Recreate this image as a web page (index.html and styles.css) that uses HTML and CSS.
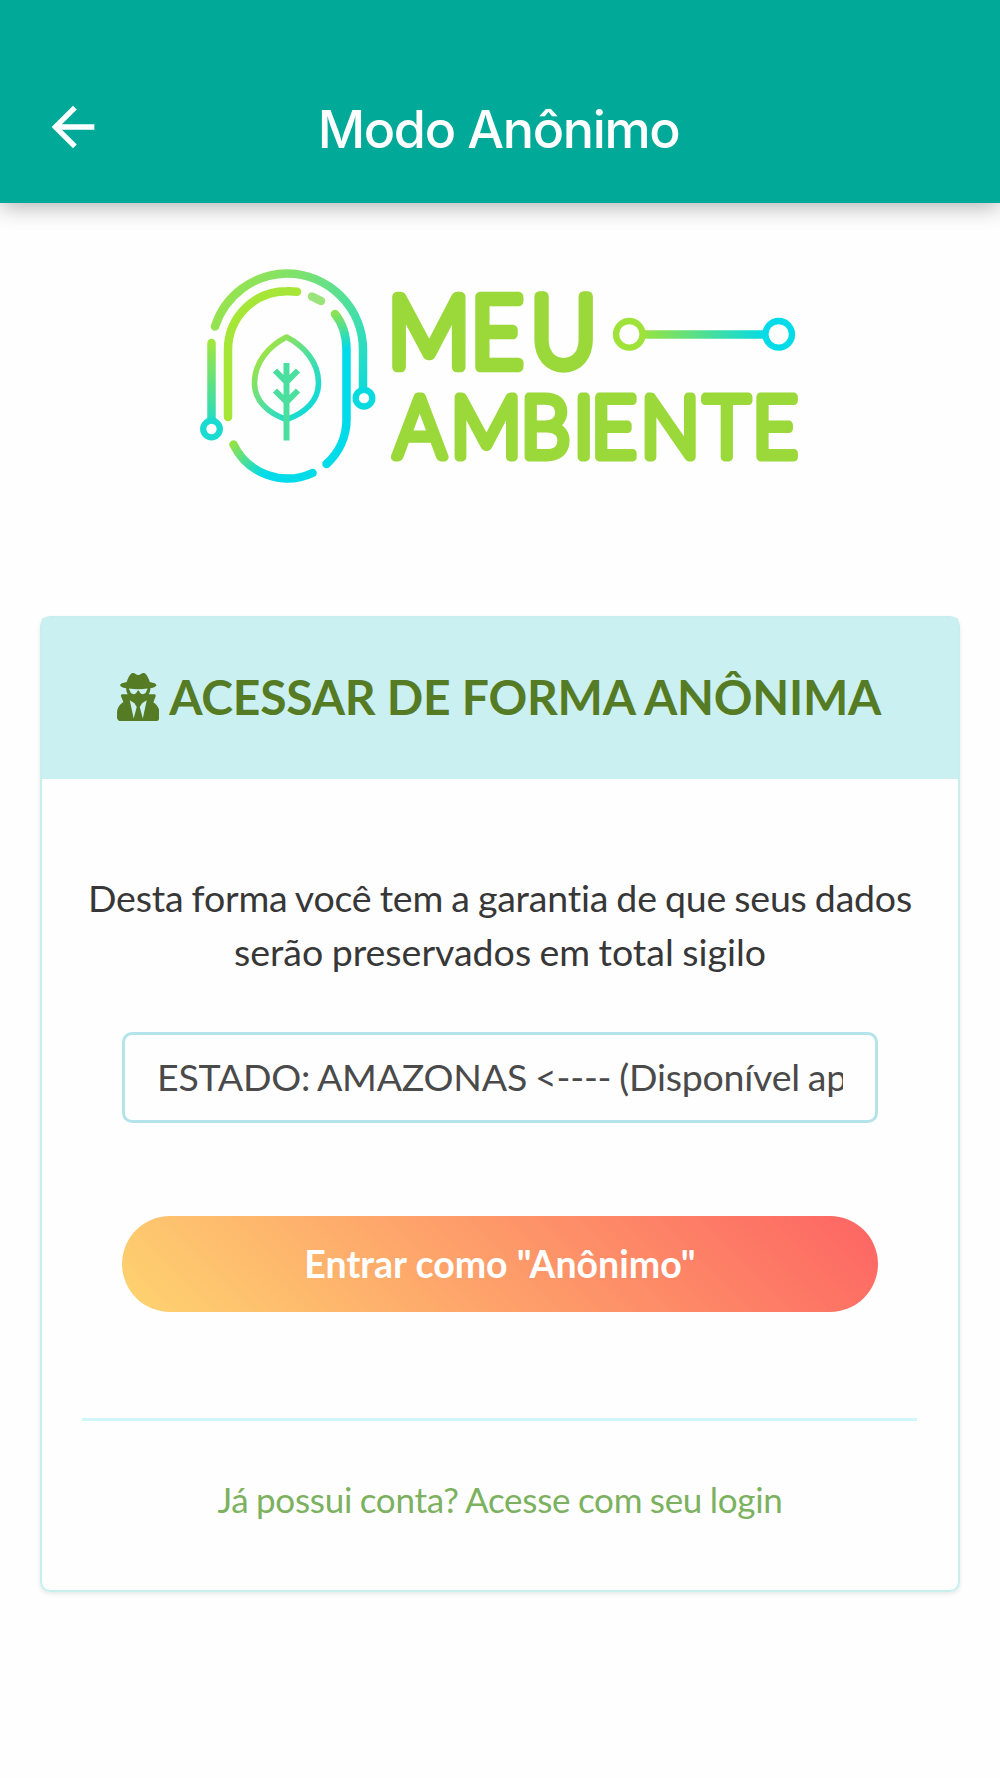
FILE: index.html
```html
<!DOCTYPE html>
<html lang="pt-BR">
<head>
<meta charset="utf-8">
<title>Modo Anônimo</title>
<link rel="stylesheet" href="styles.css">
</head>
<body>
<header class="topbar">
  <a class="back" href="#" aria-label="Voltar">
    <svg class="back-icon" viewBox="0 0 24 24"><path d="M20 11H7.83l5.59-5.59L12 4l-8 8 8 8 1.41-1.41L7.83 13H20v-2z"/></svg>
  </a>
  <h1 class="title">Modo Anônimo</h1>
</header>
<main class="content">
  <svg class="logo" viewBox="190 260 620 230" fill="none" stroke-linecap="round">
    <defs>
      <linearGradient id="outer" gradientUnits="userSpaceOnUse" x1="215" y1="300" x2="363" y2="388"><stop offset="0" stop-color="#9be34a"/><stop offset=".35" stop-color="#7ce26e"/><stop offset=".75" stop-color="#45dfa8"/><stop offset="1" stop-color="#12dbd6"/></linearGradient>
      <linearGradient id="side" gradientUnits="userSpaceOnUse" x1="211" y1="342" x2="211" y2="440"><stop offset="0" stop-color="#9ee63f"/><stop offset="1" stop-color="#0adae0"/></linearGradient>
      <linearGradient id="inner" gradientUnits="userSpaceOnUse" x1="335" y1="312" x2="343" y2="350"><stop offset="0" stop-color="#8ee24f"/><stop offset="1" stop-color="#00dbea"/></linearGradient>
      <linearGradient id="base" gradientUnits="userSpaceOnUse" x1="232" y1="443" x2="262" y2="476"><stop offset="0" stop-color="#96e345"/><stop offset="1" stop-color="#00dbea"/></linearGradient>
      <linearGradient id="leaf" gradientUnits="userSpaceOnUse" x1="258" y1="360" x2="312" y2="405"><stop offset="0" stop-color="#9be34a"/><stop offset=".5" stop-color="#4fdf9f"/><stop offset="1" stop-color="#12dad8"/></linearGradient>
      <linearGradient id="wire" gradientUnits="userSpaceOnUse" x1="640" y1="334" x2="765" y2="334"><stop offset="0" stop-color="#9be33c"/><stop offset="1" stop-color="#05dbe6"/></linearGradient>
    </defs>
    <g stroke-width="8.5">
      <path stroke="url(#outer)" d="M215 326.500A76.500 76.500 0 0 1 286.500 273.500A76.500 76.500 0 0 1 363 350.500V388"/>
      <path stroke="url(#side)" d="M211.5 343V418"/>
      <path stroke="#a6e636" d="M228 417V350A58.500 58.500 0 0 1 286.500 291.200Q292 291 297 291.800"/>
      <path stroke="#9be47b" d="M312 296.500L321 301"/>
      <path stroke="url(#inner)" d="M335 314Q346.5 328 346.5 350V419A60 60 0 0 1 326.500 464"/>
      <path stroke="url(#base)" d="M233.500 444.500A60 60 0 0 0 312.500 473"/>
    </g>
    <g stroke-width="6.3">
      <circle cx="364" cy="398.200" r="8.300" stroke="#08dbe0"/>
      <circle cx="211.500" cy="429" r="8.300" stroke="#1adbd0"/>
      <circle cx="629.300" cy="334.300" r="13.300" stroke="#9fe33a"/>
      <circle cx="778.700" cy="334.300" r="13.300" stroke="#04dbe8"/>
    </g>
    <path stroke="url(#wire)" stroke-width="8.5" stroke-linecap="butt" d="M645 334.500H764"/>
    <path stroke="url(#leaf)" stroke-width="5.600" stroke-linejoin="round" d="M286.500 337C269 346 254.500 362 254.500 383C254.500 400 267 413 286.500 419.500C306 413 318.500 400 318.500 383C318.500 362 304 346 286.500 337Z"/>
    <path stroke="#4bdf9f" stroke-width="6" stroke-linecap="butt" d="M286.500 363V440.500M275 370.500L286.500 382L298 370.500M275 390.500L286.500 402L298 390.500"/>
    <text class="word word-top" transform="scale(.93 1)" x="416.800 505.800 570.400" y="367.300">MEU</text>
    <text class="word word-bottom" transform="scale(.93 1)" x="423.700 484.400 559.700 616.600 635.400 688.700 756.900 808.800" y="456.600">AMBIENTE</text>
  </svg>
  <section class="card">
    <h2 class="card-head">
      <svg class="spy" viewBox="0 0 448 512"><path d="M383.900 308.300l23.900-62.600c4-10.500-3.700-21.700-15-21.700h-58.500c11-18.900 17.800-40.600 17.800-64v-.3c39.200-7.800 64-19.100 64-31.700 0-13.300-27.300-25.100-70.100-33-9.200-32.800-27-65.800-40.600-82.800-9.500-11.900-25.900-15.600-39.500-8.800l-27.600 13.800c-9 4.500-19.600 4.500-28.600 0L182.100 3.400c-13.600-6.800-30-3.100-39.500 8.800-13.500 17-31.400 50-40.600 82.800-42.700 7.900-70 19.700-70 33 0 12.600 24.800 23.900 64 31.700v.3c0 23.400 6.800 45.100 17.800 64H56.300c-11.500 0-19.200 11.700-14.700 22.300l25.800 60.200C27.300 329.800 0 372.700 0 422.400v44.800C0 491.900 20.100 512 44.800 512h358.400c24.700 0 44.800-20.100 44.800-44.800v-44.800c0-48.400-25.800-90.400-64.100-114.100zM176 480l-41.600-192 49.600 32 24 40-32 120zm96 0l-32-120 24-40 49.600-32L272 480zm41.700-298.500c-3.900 11.900-7 24.600-16.500 33.400-10.100 9.300-48 22.400-64-25-2.800-8.400-15.400-8.400-18.300 0-17 50.200-56 32.400-64 25-9.500-8.800-12.700-21.500-16.500-33.400-.8-2.500-6.300-5.700-6.300-5.800v-10.800c28.300 3.600 61 5.800 96 5.800s67.700-2.100 96-5.800v10.800c-.1.100-5.600 3.200-6.400 5.800z"/></svg>
      <span>ACESSAR DE FORMA ANÔNIMA</span>
    </h2>
    <div class="card-body">
      <p class="lead"><span class="tight">Desta forma você tem a garantia de que seus dados</span><br>serão preservados em total sigilo</p>
      <div class="select"><span class="select-value">ESTADO: AMAZONAS &lt;---- (Disponível apenas)</span></div>
      <button class="enter">Entrar como "Anônimo"</button>
      <hr class="rule">
      <a class="login" href="#">Já possui conta? Acesse com seu login</a>
    </div>
  </section>
</main>
</body>
</html>
```
FILE: styles.css
```css
* { box-sizing: border-box; }
body {
  margin: 0;
  min-height: 1778px;
  background: #fefefe;
  font-family: Lato, "Liberation Sans", sans-serif;
  font-variant-ligatures: none;
}
.topbar {
  display: grid;
  grid-template-columns: 105px 1fr 105px;
  height: 203px;
  padding-top: 90px;
  background: #00a998;
  box-shadow: 0 3px 22px rgba(0, 0, 0, .32);
}
.back { padding: 4.500px 0 0 41px; }
.back-icon { display: block; width: 64px; height: 64px; fill: #fff; }
.title {
  margin: 0;
  padding-right: 3px;
  color: #fff;
  font: 500 52px/80px Inter, sans-serif;
  letter-spacing: -1.350px;
  text-align: center;
  white-space: nowrap;
}
.content { display: flex; flex-direction: column; padding: 57px 40px 0; }
.logo { display: block; width: 620px; height: 230px; margin-left: 150px; }
.word {
  fill: #9bd83a;
  stroke: #9bd83a;
  stroke-linejoin: round;
  font-family: Lato, sans-serif;
  font-weight: 300;
}
.word-top { font-size: 98px; stroke-width: 10.300px; }
.word-bottom { font-size: 84.500px; stroke-width: 8.800px; }
.card {
  height: 976px;
  margin-top: 126px;
  border: 2.500px solid #c9eeee;
  border-radius: 10px;
  box-shadow: 0 2px 4px rgba(0, 60, 60, .1);
}
.card-head {
  display: flex;
  justify-content: center;
  align-items: center;
  gap: 10px;
  height: 161px;
  margin: 0;
  padding: 0 2px 3px 0;
  background: #caf0f2;
  color: #557b24;
  font-size: 48px;
  font-weight: 700;
  line-height: 60px;
  letter-spacing: -.250px;
  white-space: nowrap;
}
.card-head span { margin-top: -1px; }
.spy { width: 42.500px; height: 48.500px; fill: currentColor; }
.card-body {
  display: flex;
  flex-direction: column;
  padding: 92px 40px 0;
  text-align: center;
}
.lead { margin: 0; color: #373737; font-size: 37.500px; line-height: 53.500px; word-spacing: -1.200px; white-space: nowrap; }
.tight { letter-spacing: -.2px; }
.select {
  height: 91px;
  margin: 54px 40px 0;
  padding: 0 32px;
  border: 3px solid #b3e4ea;
  border-radius: 10px;
  color: #4a4a4a;
  font-size: 37.500px;
  line-height: 84px;
  letter-spacing: -.220px;
  word-spacing: -1.500px;
  text-align: left;
}
.select-value { display: block; overflow: hidden; white-space: nowrap; }
.enter {
  height: 96px;
  margin: 93px 40px 0;
  border: 0;
  border-radius: 48px;
  background: linear-gradient(45deg, #fed470, #fd6463);
  color: #fff;
  font: 700 37.500px/94px Lato, sans-serif;
}
.rule { width: 835px; height: 2.500px; margin: 106px 0 0; border: 0; background: #d0f6fa; }
.login { margin-top: 54px; color: #7bb15f; font-size: 35px; line-height: 48px; letter-spacing: -.24px; word-spacing: -1.200px; text-decoration: none; }
```
